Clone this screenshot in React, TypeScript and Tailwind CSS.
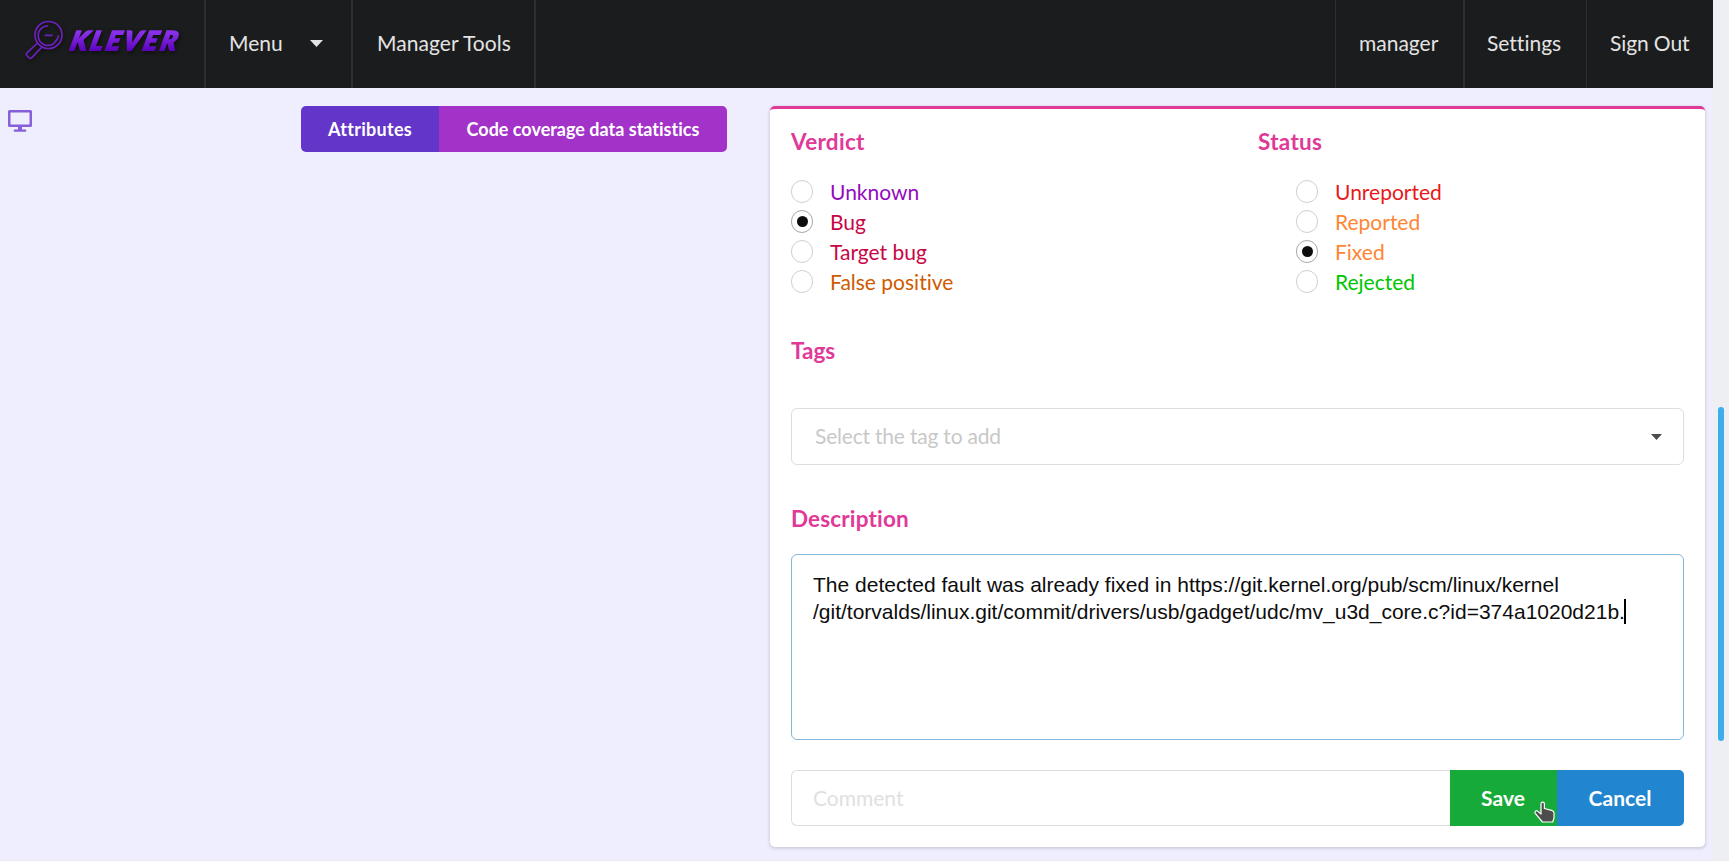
import React from "react";

type Option = { label: string; color: string; checked?: boolean };

const verdicts: Option[] = [
  { label: "Unknown", color: "text-[#930bbd]" },
  { label: "Bug", color: "text-[#c70646]", checked: true },
  { label: "Target bug", color: "text-[#c70646]" },
  { label: "False positive", color: "text-[#d05a00]" },
];

const statuses: Option[] = [
  { label: "Unreported", color: "text-[#e81919]" },
  { label: "Reported", color: "text-[#ff8533]" },
  { label: "Fixed", color: "text-[#ff8533]", checked: true },
  { label: "Rejected", color: "text-[#00c600]" },
];

function Logo() {
  return (
    <svg width="170" height="48" viewBox="0 0 170 48" className="drop-shadow-[1px_2px_2px_rgba(0,0,0,0.5)]">
      <defs>
        <linearGradient id="brand" x1="0" y1="0" x2="0" y2="1">
          <stop offset="0.25" stopColor="#8a30ea" />
          <stop offset="0.85" stopColor="#5a00b8" />
        </linearGradient>
      </defs>
      <g fill="none" stroke="#6c20be" strokeWidth="1.700" strokeLinecap="round" strokeLinejoin="round">
        <circle cx="34.500" cy="21" r="13.500" />
        <path d="M33.500 11.800A9.800 9.800 0 1 0 39.500 29.700M44.300 22A9.800 9.800 0 0 1 40.500 28.500" />
        <path d="M31.500 21.300h6.500" />
        <path d="M23.500 29 12.800 39.200a1.800 1.800 0 0 0 0 2.300l2.300 2.300a1.800 1.800 0 0 0 2.400 0L28 33" />
      </g>
      <text
        x="55"
        y="36.500"
        transform="translate(9 0) skewX(-14)"
        textLength="106"
        lengthAdjust="spacing"
        fill="url(#brand)"
        stroke="url(#brand)"
        strokeWidth="1.800"
        className="font-['Lato',sans-serif] text-[26px] font-black italic"
      >
        KLEVER
      </text>
    </svg>
  );
}

function Caret({ className }: { className: string }) {
  return (
    <svg viewBox="0 0 12 7" preserveAspectRatio="none" className={className} fill="currentColor">
      <path d="M0 0h12L6 7z" />
    </svg>
  );
}

function Monitor() {
  return (
    <svg width="24" height="22" viewBox="0 0 24 22" fill="#865fd9">
      <path fillRule="evenodd" d="M1.500 0h21A1.500 1.500 0 0 1 24 1.500v14a1.500 1.500 0 0 1-1.500 1.500H14v2.500h3.500a.8.800 0 0 1 .8.800v.7a.8.800 0 0 1-.8.800h-11a.8.800 0 0 1-.8-.8v-.7a.8.800 0 0 1 .8-.8H10v-2.500H1.500A1.500 1.500 0 0 1 0 15.500v-14A1.500 1.500 0 0 1 1.500 0zM2.500 2.500v12h19v-12z" />
    </svg>
  );
}

function Pointer() {
  return (
    <svg width="21" height="22" viewBox="0 0 21 22" className="absolute left-[84px] top-[31px]">
      <path
        d="M7 2.700C7 .5 10.400.5 10.400 2.700V7.500l7.300 1.800c1.500.4 2.300 1.200 2.300 2.500v5.200l-1.300 4H8.500L1.300 12.300c-1-1.800.9-3.200 2.200-2.200L7 13z"
        fill="#4d4d4d"
        stroke="#fff"
        strokeWidth="1.200"
        strokeLinejoin="round"
      />
    </svg>
  );
}

function Options({ items, name }: { items: Option[]; name: string }) {
  return (
    <div role="radiogroup" aria-label={name}>
      {items.map((o) => (
        <div key={o.label} role="radio" aria-checked={!!o.checked} className="flex h-[30px] items-start">
          <span
            className={
              o.checked
                ? "flex h-[23px] w-[22px] items-center justify-center rounded-full border border-[#a8a8a9]"
                : "h-[23px] w-[22px] rounded-full border border-[#d0d0d1]"
            }
          >
            {o.checked && <span className="h-[11px] w-[11px] rounded-full bg-[#0d0d0d]" />}
          </span>
          <span className={`ml-[17px] text-[21px] leading-[23px] ${o.color}`}>{o.label}</span>
        </div>
      ))}
    </div>
  );
}

const heading = "text-[22.5px] font-bold leading-[28px] text-[#e03997]";

export default function App() {
  return (
    <div className="flex h-[861px] w-[1729px] overflow-hidden border-b border-[#ebebef] bg-[#efeeff] font-['Lato',sans-serif] [font-variant-ligatures:none]">
      <div className="flex w-[1713px] flex-col">
        <nav className="flex h-[88px] shrink-0 bg-[#1b1c1d] text-[21px] leading-[30px] text-[#e3e3e3]">
          <div className="w-[206px] border-r-2 border-[#2d2e2f] pl-[14px] pt-[14px]">
            <Logo />
          </div>
          <div className="flex w-[147px] items-center border-r-2 border-[#2d2e2f] pb-[2px] pl-[23px]">
            Menu
            <Caret className="ml-[27px] h-[7px] w-[13px]" />
          </div>
          <div className="flex w-[183px] items-center border-r-2 border-[#2d2e2f] pb-[2px] pl-[24px] tracking-[0.05px]">
            Manager Tools
          </div>
          <div className="ml-auto flex w-[128px] items-center border-l border-[#2d2e2f] pb-[2px] pl-[23px]">manager</div>
          <div className="flex w-[123px] items-center border-l-2 border-[#2d2e2f] pb-[2px] pl-[22px]">Settings</div>
          <div className="flex w-[127px] items-center border-l border-[#2d2e2f] pb-[2px] pl-[23px] tracking-[-0.1px]">
            Sign Out
          </div>
        </nav>

        <main className="flex flex-1">
          <aside className="w-[301px] pl-[8px] pt-[22px]">
            <Monitor />
          </aside>
          <div className="w-[469px] pt-[18px]">
            <div className="flex h-[46px] w-[426px] overflow-hidden rounded-[5px] text-[18px] font-bold leading-[46px] text-white">
              <button className="w-[138px] bg-[#6435c9] tracking-[0.3px]">Attributes</button>
              <button className="flex-1 bg-[#a333c8]">Code coverage data statistics</button>
            </div>
          </div>

          <section className="mt-[18px] h-[741px] w-[935px] rounded-[5px] border-t-[3px] border-[#e03997] bg-white px-[21px] pt-[19px] shadow-[0_1px_3px_1px_#cfcfdd]">
            <div className="flex">
              <div className="w-[467px]">
                <h4 className={`tracking-[0.3px] ${heading}`}>Verdict</h4>
                <div className="mt-[24px]">
                  <Options name="Verdict" items={verdicts} />
                </div>
              </div>
              <div>
                <h4 className={`tracking-[0.3px] ${heading}`}>Status</h4>
                <div className="ml-[38px] mt-[24px]">
                  <Options name="Status" items={statuses} />
                </div>
              </div>
            </div>

            <h4 className={`mt-[37px] ${heading}`}>Tags</h4>
            <div className="mt-[43px] flex h-[57px] items-center justify-between rounded-[6px] border border-[#dededf] pl-[23px] pr-[21px]">
              <span className="pb-[2px] text-[21px] tracking-[-0.200px] text-[#c8c8c8]">Select the tag to add</span>
              <Caret className="h-[6px] w-[11px] text-[#4d4d4d]" />
            </div>

            <h4 className={`mt-[40px] tracking-[0.15px] ${heading}`}>Description</h4>
            <div className="mt-[21px] h-[186px] whitespace-pre rounded-[6px] border border-[#85b7d9] pl-[21px] pt-[16px] font-['Liberation_Sans',Arial,sans-serif] text-[21px] leading-[27px] text-[#0d0d0d]">
              <div>The detected fault was already fixed in https://git.kernel.org/pub/scm/linux/kernel</div>
              <div className="flex items-center">
                /git/torvalds/linux.git/commit/drivers/usb/gadget/udc/mv_u3d_core.c?id=374a1020d21b.
                <span className="-ml-px h-[25px] w-[2px] bg-black" />
              </div>
            </div>

            <div className="mt-[30px] flex h-[56px] text-[21px]">
              <div className="flex flex-1 items-center rounded-l-[6px] border border-r-0 border-[#dededf] pl-[21px] text-[#e0e0e0]">
                Comment
              </div>
              <button className="relative w-[107px] bg-[#16ab39] pr-[1px] font-bold text-white">
                Save
                <Pointer />
              </button>
              <button className="w-[127px] rounded-r-[5px] bg-[#2185d0] pr-[1px] font-bold text-white">Cancel</button>
            </div>
          </section>
        </main>
      </div>

      <div className="w-[16px] bg-[#eeeff2] pl-[5px] pt-[407px]">
        <div className="h-[334px] w-[6px] rounded-full bg-[#3daee9]" />
      </div>
    </div>
  );
}
